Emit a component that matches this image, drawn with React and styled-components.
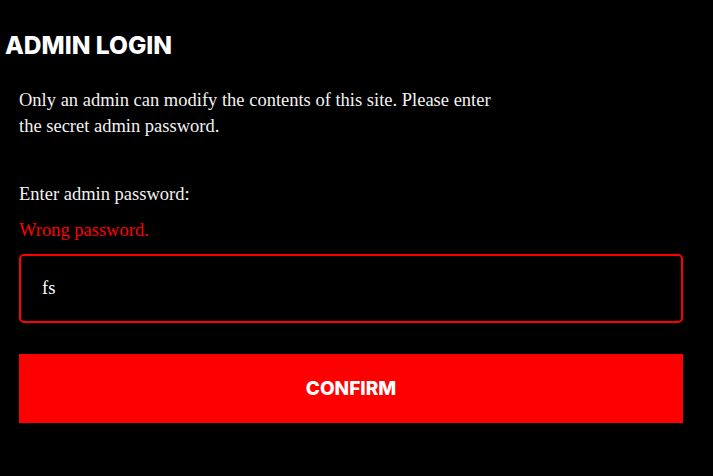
import React from "react";
import styled, { createGlobalStyle } from "styled-components";

const Global = createGlobalStyle`
  html, body {
    margin: 0;
    padding: 0;
    background: #000;
  }
  * {
    box-sizing: border-box;
  }
`;

const Page = styled.div`
  background: #000;
  min-height: 476px;
  padding: 31px 30px 40px 19px;
  color: #fff;
  font-family: "Liberation Serif", "DejaVu Serif", serif;
`;

const Title = styled.h1`
  margin: 0 0 0 -14px;
  font-family: "Inter", "Open Sans", sans-serif;
  font-weight: 800;
  font-size: 24.5px;
  line-height: 28px;
  letter-spacing: 0;
  color: #fff;
`;

const Intro = styled.p`
  margin: 28px 0 0;
  max-width: 490px;
  font-size: 18.5px;
  line-height: 26px;
  color: #f2f2f2;
`;

const Form = styled.form`
  display: flex;
  flex-direction: column;
  margin-top: 43px;
`;

const Label = styled.label`
  font-size: 18.5px;
  line-height: 24px;
  color: #f2f2f2;
`;

const Error = styled.div`
  margin-top: 12px;
  font-size: 18.5px;
  line-height: 24px;
  color: #ff0000;
`;

const Input = styled.input`
  margin-top: 12px;
  width: 664px;
  height: 69px;
  padding: 0 21px;
  background: #000;
  border: 2px solid #ff0000;
  border-radius: 5px;
  color: #fff;
  font-family: "Liberation Serif", "DejaVu Serif", serif;
  font-size: 18.5px;
  outline: none;
`;

const Button = styled.button`
  margin-top: 31px;
  width: 664px;
  height: 69px;
  border: none;
  background: #ff0000;
  color: #fff;
  font-family: "Inter", "Open Sans", sans-serif;
  font-weight: 800;
  font-size: 19px;
  letter-spacing: 0;
  cursor: pointer;
`;

export default function App() {
  return (
    <>
      <Global />
      <Page>
        <Title>ADMIN LOGIN</Title>
        <Intro>
          Only an admin can modify the contents of this site. Please enter the
          secret admin password.
        </Intro>
        <Form onSubmit={(e) => e.preventDefault()}>
          <Label htmlFor="pw">Enter admin password:</Label>
          <Error>Wrong password.</Error>
          <Input id="pw" type="text" defaultValue="fs" />
          <Button type="submit">CONFIRM</Button>
        </Form>
      </Page>
    </>
  );
}
